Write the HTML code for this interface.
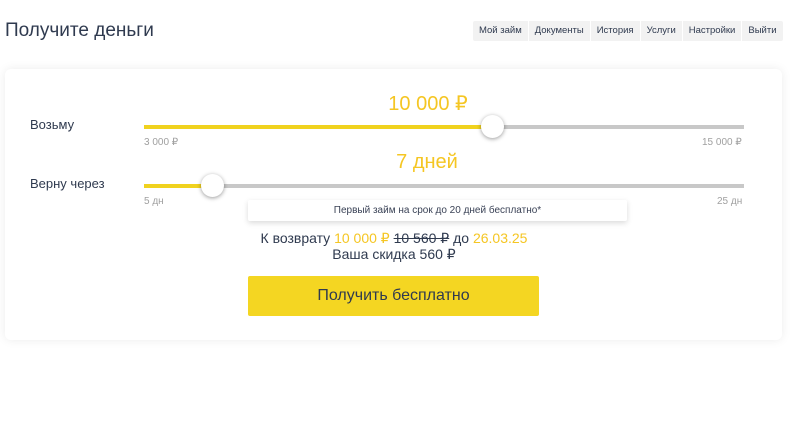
<!DOCTYPE html>
<html><head><meta charset="utf-8"><style>
*{margin:0;padding:0;box-sizing:border-box}
body{width:800px;height:428px;background:#fff;font-family:"Liberation Sans",sans-serif;color:#2f3a4f;position:relative;overflow:hidden}
.a{position:absolute}
h1{position:absolute;left:5px;top:20px;font-size:19px;font-weight:normal;color:#2f3a4f}
.nav{position:absolute;left:473px;top:21px;height:20px;display:flex;background:#f2f2f2;border-radius:2px}
.nav div{font-size:9.5px;padding:0 6px;line-height:20px;border-left:1px solid #fff;color:#2f3a4f}
.nav div:first-child{border:none}
.card{position:absolute;left:5px;top:69px;width:777px;height:271px;background:#fff;border-radius:6px;box-shadow:0 0 10px rgba(0,0,0,.08)}
.lbl{font-size:13px;color:#2f3a4f}
.val{font-size:20px;color:#f5c623;text-align:center;width:200px}
.trk{height:4px;background:#c8c8c8;left:144px;width:600px}
.fill{height:4px;background:#f0d21e}
.th{width:23px;height:23px;border-radius:50%;background:#fff;box-shadow:0 1px 4px rgba(0,0,0,.4)}
.mn{font-size:10px;color:#a0a0a0}
.y{color:#f5c623}
</style></head><body>
<h1>Получите деньги</h1>
<div class="nav"><div>Мой займ</div><div>Документы</div><div>История</div><div>Услуги</div><div>Настройки</div><div>Выйти</div></div>
<div class="card"></div>
<div class="a lbl" style="left:30px;top:117px">Возьму</div>
<div class="a val" style="left:328px;top:91px">10 000 ₽</div>
<div class="a trk" style="top:125px"></div>
<div class="a fill" style="left:144px;top:125px;width:348px"></div>
<div class="a th" style="left:481px;top:115px"></div>
<div class="a mn" style="left:144px;top:137px">3 000 ₽</div>
<div class="a mn" style="left:702px;top:137px">15 000 ₽</div>
<div class="a lbl" style="left:30px;top:176px">Верну через</div>
<div class="a val" style="left:327px;top:151px">7 дней</div>
<div class="a trk" style="top:184px"></div>
<div class="a fill" style="left:144px;top:184px;width:68px"></div>
<div class="a th" style="left:201px;top:174px"></div>
<div class="a mn" style="left:144px;top:196px">5 дн</div>
<div class="a mn" style="left:717px;top:196px">25 дн</div>
<div class="a" style="left:248px;top:200px;width:379px;height:21px;background:#fff;box-shadow:0 2px 6px rgba(0,0,0,.15);border-radius:2px;font-size:10px;text-align:center;line-height:21px;color:#3a4256">Первый займ на срок до 20 дней бесплатно*</div>
<div class="a" style="left:200px;top:230px;width:388px;text-align:center;font-size:14px">К возврату <span class="y">10 000 ₽</span> <s>10 560 ₽</s> до <span class="y">26.03.25</span></div>
<div class="a" style="left:200px;top:246px;width:388px;text-align:center;font-size:14px">Ваша скидка 560 ₽</div>
<div class="a" style="left:248px;top:276px;width:291px;height:40px;background:#f4d622;border-radius:2px;text-align:center;line-height:40px;font-size:16px;color:#2f3a4f">Получить бесплатно</div>
</body></html>
